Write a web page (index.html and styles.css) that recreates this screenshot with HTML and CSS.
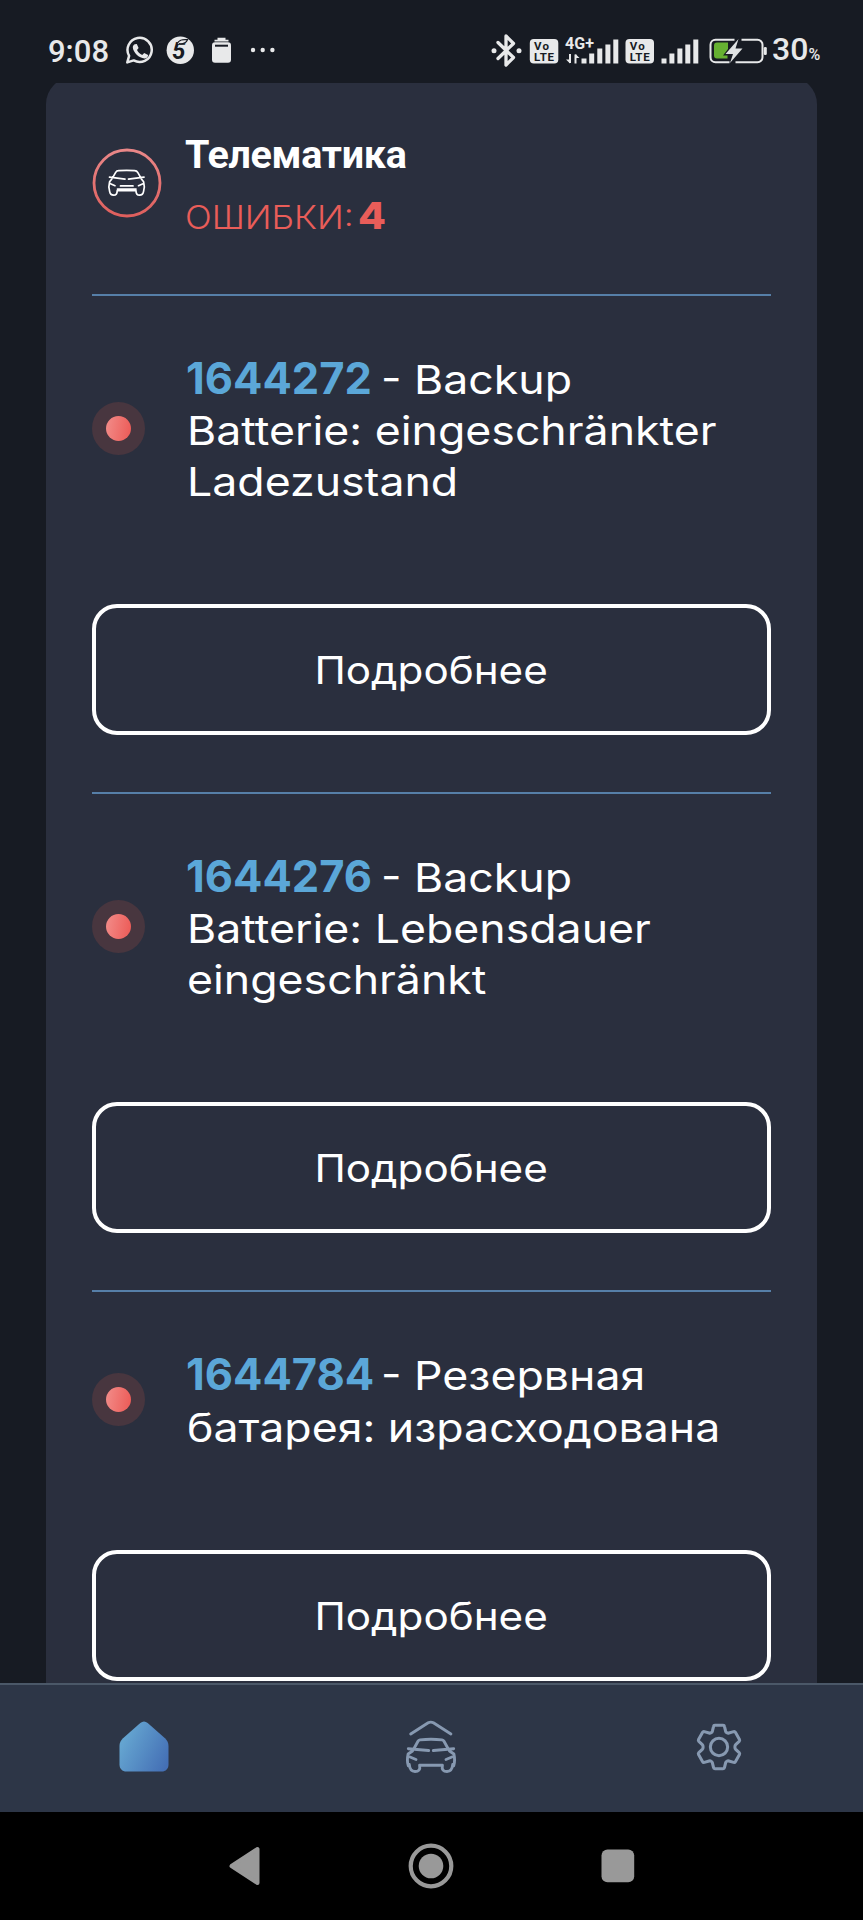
FILE: index.html
```html
<!DOCTYPE html>
<html lang="ru">
<head>
<meta charset="utf-8">
<title>Телематика</title>
<link rel="stylesheet" href="styles.css">
</head>
<body>
<div class="screen">
  <header class="status">
    <div class="status-left">
      <span class="time">9:08</span>
      <svg class="notif" width="150" height="34" viewBox="125 33.300 150 34">
        <path d="M127.3 62.7l1.8-6.6a12.1 12.1 0 1 1 4.6 4.6z" fill="none" stroke="#e8e9ea" stroke-width="2.5" stroke-linejoin="round"/>
        <path d="M134.8 44.5l2-.2 1.8 4-1.6 2c1.3 2.4 2.8 3.9 5.2 5l2-2.1 3.9 2c.2 1.9-1.6 3.4-3.5 3.5-5.3.1-11.600-6-11.800-11.100 0-1.300.8-2.500 2-3.100z" fill="#e8e9ea"/>
        <circle cx="180.300" cy="50.500" r="13.700" fill="#e8e9ea"/>
        <text class="five" x="172" y="59">5</text>
        <path d="M177 44c3-5 7-4 10.500-4-1.500 3.500-4 4.500-8.500 4" fill="#e8e9ea" stroke="#171b23" stroke-width="1.200"/>
        <path d="M217.500 38h8v2h3v1.800h-14V40h3z" fill="#e8e9ea"/>
        <rect x="212" y="42.500" width="19" height="20.500" rx="3" fill="#e8e9ea"/>
        <path d="M215 46h13" stroke="#171b23" stroke-width="2"/>
        <g fill="#e8e9ea"><circle cx="253" cy="50.300" r="2.200"/><circle cx="262.700" cy="50.300" r="2.200"/><circle cx="272.400" cy="50.300" r="2.200"/></g>
      </svg>
    </div>
    <div class="status-right">
      <svg width="278" height="36" viewBox="489.500 31.500 278 36">
        <path d="M497.500 42l15.500 15-7.500 7.500v-29l7.500 7.500-15.500 15" fill="none" stroke="#e8e9ea" stroke-width="3.300" stroke-linejoin="round" stroke-linecap="round"/>
        <circle cx="493.500" cy="50.300" r="2.500" fill="#e8e9ea"/><circle cx="518.500" cy="50.300" r="2.500" fill="#e8e9ea"/>
        <rect x="529.300" y="38.500" width="28.500" height="24.500" rx="4" fill="#e8e9ea"/>
        <text class="volte" x="533.500" y="49.500" textLength="15">Vo</text><text class="volte" x="533.500" y="60.200" textLength="20">LTE</text>
        <text class="net" x="564.500" y="48" textLength="29">4G+</text>
        <path d="M569.500 53.500v9M575 63v-9" stroke="#e8e9ea" stroke-width="2"/><path d="M569.500 63l-4-4h4zM575 53.500l4 4h-4z" fill="#e8e9ea"/>
        <path d="M583.500 63v-5M591.200 63v-10M599.300 63v-15M607.400 63v-19M615.300 63v-24" stroke="#e8e9ea" stroke-width="5"/>
        <rect x="625" y="38.500" width="28.500" height="24.500" rx="4" fill="#e8e9ea"/>
        <text class="volte" x="629.200" y="49.500" textLength="15">Vo</text><text class="volte" x="629.200" y="60.200" textLength="20">LTE</text>
        <path d="M663.500 63v-5M671.400 63v-10M679.400 63v-15M687.300 63v-19M695.300 63v-24" stroke="#e8e9ea" stroke-width="5"/>
        <path d="M734 39.300h-19a5 5 0 0 0-5 5v12.400a5 5 0 0 0 5 5h14M741 39.300h16a5 5 0 0 1 5 5v12.400a5 5 0 0 1-5 5h-22" fill="none" stroke="#e8e9ea" stroke-width="2"/>
        <path d="M716.500 42h11v6.500l-5 6.500h4.500v3h-10.500a3 3 0 0 1-3-3v-10a3 3 0 0 1 3-3z" fill="#66b132"/>
        <path d="M738 38.500l-13 15h7.500l-3 9 12.500-14.500h-7z" fill="#dfe2e3"/>
        <rect x="763.300" y="46.500" width="3" height="8" rx="1.300" fill="#e8e9ea"/>
      </svg>
      <span class="percent">30<small>%</small></span>
    </div>
  </header>

  <main class="viewport">
    <section class="card">
      <div class="module">
        <svg class="module-icon" width="70" height="70" viewBox="92 148.300 70 70">
          <defs><linearGradient id="ring" x1="0" y1="0" x2="0" y2="1"><stop offset="0" stop-color="#e98788"/><stop offset="1" stop-color="#df5f5d"/></linearGradient></defs>
          <circle cx="127" cy="183.300" r="33" fill="none" stroke="url(#ring)" stroke-width="2.800"/>
          <g fill="none" stroke="#fff" stroke-width="1.700" stroke-linecap="round" stroke-linejoin="round">
            <path d="M112.500 178.200l3.200-5.500c.7-1.200 1.500-1.600 3-1.700q8-.7 16 0c1.500.1 2.300.5 3 1.700l3.200 5.500M109.500 177.500l15.500 2M144 177.500l-15.500 2M112 179l-2.400 3c-1 3.500-.9 7 .1 10 .5 3.500 2.500 3.500 4 3.500 2.200 0 3.500-1.200 3.500-4.500h18.800c0 3.300 1.300 4.500 3.500 4.500 1.500 0 3.500 0 4-3.500 1-3 1.100-6.500.1-10l-2.400-3M110.500 184l4.500 2M143 184l-4.500 2M120.500 186.200h12.500M117.500 189.300h18.500"/>
          </g>
        </svg>
        <div class="module-text">
          <h1>Телематика</h1>
          <p class="errors"><span class="label">ОШИБКИ:</span><b>4</b></p>
        </div>
      </div>

      <article class="fault">
        <div class="fault-row">
          <i class="dot"></i>
          <p class="fault-text"><span class="line"><b>1644272</b><span class="wide">- Backup</span></span><span class="line"><span class="wide">Batterie: eingeschränkter</span></span><span class="line"><span class="wide">Ladezustand</span></span></p>
        </div>
        <button class="more"><span>Подробнее</span></button>
      </article>

      <article class="fault">
        <div class="fault-row">
          <i class="dot"></i>
          <p class="fault-text"><span class="line"><b>1644276</b><span class="wide">- Backup</span></span><span class="line"><span class="wide">Batterie: Lebensdauer</span></span><span class="line"><span class="wide">eingeschränkt</span></span></p>
        </div>
        <button class="more"><span>Подробнее</span></button>
      </article>

      <article class="fault">
        <div class="fault-row short">
          <i class="dot"></i>
          <p class="fault-text"><span class="line"><b>1644784</b><span class="wide">- Резервная</span></span><span class="line"><span class="wide">батарея: израсходована</span></span></p>
        </div>
        <button class="more"><span>Подробнее</span></button>
      </article>
    </section>
  </main>

  <nav class="tabs">
    <svg width="56" height="56" viewBox="115.500 1719.500 56 56">
      <defs><linearGradient id="home" x1="0" y1=".3" x2="1" y2=".8"><stop offset=".1" stop-color="#64a4d0"/><stop offset="1" stop-color="#446fb5"/></linearGradient></defs>
      <path d="M139.800 1723.400c2.400-2 5-2 7.400 0l17.300 15.400c2.300 2.100 3.500 4.700 3.500 7.800v18.400c0 4.300-2.700 7-7 7h-35c-4.300 0-7-2.700-7-7v-18.400c0-3.100 1.200-5.700 3.500-7.800z" fill="url(#home)"/>
    </svg>
    <svg width="56" height="56" viewBox="403.500 1719.500 56 56">
      <g fill="none" stroke="#8799b1" stroke-width="2.900" stroke-linecap="round" stroke-linejoin="round">
        <path d="M411.200 1734.500l17.500-11.200q2.600-1.400 5.200 0l17.500 11.200M414.500 1749l4-7.300q.6-1.100 2-1.300q11-1.200 22 0q1.400.2 2 1.300l4 7.300M408.800 1749.200l20.400 1.800M454.200 1749.200l-20.400 1.800M413 1751.500l-4.400 3c-1 4.500-.9 8.500.2 11.700M450 1751.500l4.400 3c1 4.500.9 8.500-.2 11.700M409.800 1765c.4 4.800 2.200 7 5.700 7s5.500-1.700 4.600-6.300h22.800c-.9 4.600 1.100 6.300 4.600 6.300s5.300-2.200 5.700-7M410.500 1757.500l6 2.500M452.500 1757.500l-6 2.500"/>
      </g>
    </svg>
    <svg width="56" height="56" viewBox="692 1720 55 55">
      <g fill="none" stroke="#8799b1" stroke-width="3" stroke-linejoin="round">
        <path d="M715.500 1726.200h8q1.200 0 1.400 1.200l1.100 4.600q.3 1 1.200 1.500q1 .6 2 .3l4.700-1.400q1.100-.3 1.700.7l4 7q.5 1-.3 1.800l-3.400 3.200q-.8.800-.8 2.400t.8 2.400l3.400 3.200q.8.800.3 1.800l-4 7q-.6 1-1.700.7l-4.700-1.400q-1-.3-2 .3q-.9.500-1.200 1.500l-1.100 4.600q-.2 1.200-1.400 1.200h-8q-1.200 0-1.400-1.200l-1.100-4.600q-.3-1-1.200-1.500q-1-.6-2-.3l-4.700 1.400q-1.100.3-1.700-.7l-4-7q-.5-1 .3-1.800l3.400-3.200q.8-.8.8-2.400t-.8-2.400l-3.400-3.200q-.8-.8-.3-1.800l4-7q.6-1 1.700-.7l4.700 1.400q1 .3 2-.3q.9-.5 1.200-1.500l1.100-4.600q.2-1.200 1.400-1.200z"/>
        <circle cx="719.500" cy="1747.500" r="8.500"/>
      </g>
    </svg>
  </nav>
  <footer class="sysnav">
    <svg width="48" height="48" viewBox="220.500 1842 48 48"><path d="M231 1866l26-17v34z" fill="#999" stroke="#999" stroke-width="4" stroke-linejoin="round"/></svg>
    <svg width="48" height="48" viewBox="407.500 1842 48 48"><circle cx="431.500" cy="1866" r="20.300" fill="none" stroke="#999" stroke-width="4.200"/><circle cx="431.500" cy="1866" r="12.300" fill="#999"/></svg>
    <svg width="48" height="48" viewBox="594.500 1842 48 48"><rect x="602" y="1849.500" width="32.700" height="32.700" rx="6" fill="#999"/></svg>
  </footer>
</div>
</body>
</html>
```
FILE: styles.css
```css
* { box-sizing: border-box; }
body { margin: 0; background: #171b23; }
svg { display: block; flex: none; }
.screen {
  width: 863px;
  height: 1920px;
  display: flex;
  flex-direction: column;
  overflow: hidden;
  color: #fff;
  font-family: Inter, "Noto Sans", sans-serif;
}

/* Status bar */
.status {
  height: 83px;
  flex: none;
  display: flex;
  justify-content: space-between;
  padding: 32px 42px 0 48px;
  color: #e8e9ea;
  font-family: Roboto, sans-serif;
}
.status-left, .status-right { display: flex; height: 36px; align-items: center; }
.time { width: 77px; font-size: 31px; font-weight: 500; line-height: 36px; padding-top: 3px; }
.percent { width: 53px; padding-left: 4px; font-size: 32px; font-weight: 500; line-height: 36px; padding-top: 4px; white-space: nowrap; }
.percent small { font-size: 16px; }
.five { font: italic bold 24px Roboto, sans-serif; fill: #171b23; }
.volte { font: bold 11.500px Roboto, sans-serif; fill: #171b23; }
.net { font: bold 16px Roboto, sans-serif; fill: #e8e9ea; }

/* Scrolled card */
.viewport { height: 1600px; flex: none; overflow: hidden; padding: 0 46px; }
.card {
  margin-top: -6px;
  height: 1640px;
  padding: 0 46px;
  border-radius: 27px 27px 0 0;
  background: #2a2f3e;
}
.module { height: 217px; display: flex; padding-top: 71px; gap: 23px; }
.module-text { margin-top: -16px; }
h1 { margin: 0; font: bold 39.500px/46px Roboto, sans-serif; letter-spacing: -.3px; }
.errors { margin: 15px 0 0; display: flex; align-items: baseline; color: #e95d59; line-height: 46px; }
.errors .label { width: 173px; font-size: 32px; font-weight: 300; transform: scaleX(1.1); transform-origin: left; }
.errors b { font-size: 37px; font-weight: 800; transform: scaleX(1.1); transform-origin: left; }

/* Fault entries */
.fault { border-top: 2px solid #567fa8; padding-top: 57px; }
.fault-row { display: flex; align-items: center; gap: 42px; height: 150px; }
.fault-row.short { height: 100px; }
.dot {
  width: 53px;
  height: 53px;
  flex: none;
  border-radius: 50%;
  background: #48363f;
  display: grid;
  place-items: center;
}
.dot::before {
  content: "";
  width: 25px;
  height: 25px;
  border-radius: 50%;
  background: linear-gradient(100deg, #f28d8a, #ec5955);
}
.fault-text { margin: 0; padding-top: 7px; }
.line { display: block; height: 51.200px; line-height: 51.200px; font-size: 39.500px; font-weight: 420; white-space: nowrap; }
.line b { display: inline-block; width: 195px; margin-left: -1px; font-size: 43.500px; font-weight: 750; color: #5ba7d8; line-height: 43px; }
/* Widened letterforms for the body copy */
.wide { display: inline-block; transform: scaleX(1.13); transform-origin: left; }
.more {
  display: block;
  width: 100%;
  height: 131px;
  margin: 101px 0 57px;
  border: 4px solid #fff;
  border-radius: 25px;
  background: none;
  color: #fff;
  font: 420 38px Inter, "Noto Sans", sans-serif;
}
.more span { display: inline-block; transform: scaleX(1.11); }

/* Bottom bars */
.tabs {
  height: 129px;
  flex: none;
  display: grid;
  grid-template-columns: repeat(3, 1fr);
  justify-items: center;
  padding-top: 34px;
  border-top: 2px solid #4b5868;
  background: #2d3647;
}
.sysnav { height: 108px; display: flex; justify-content: center; align-items: center; gap: 138.500px; padding-right: 1px; background: #000; }
```
